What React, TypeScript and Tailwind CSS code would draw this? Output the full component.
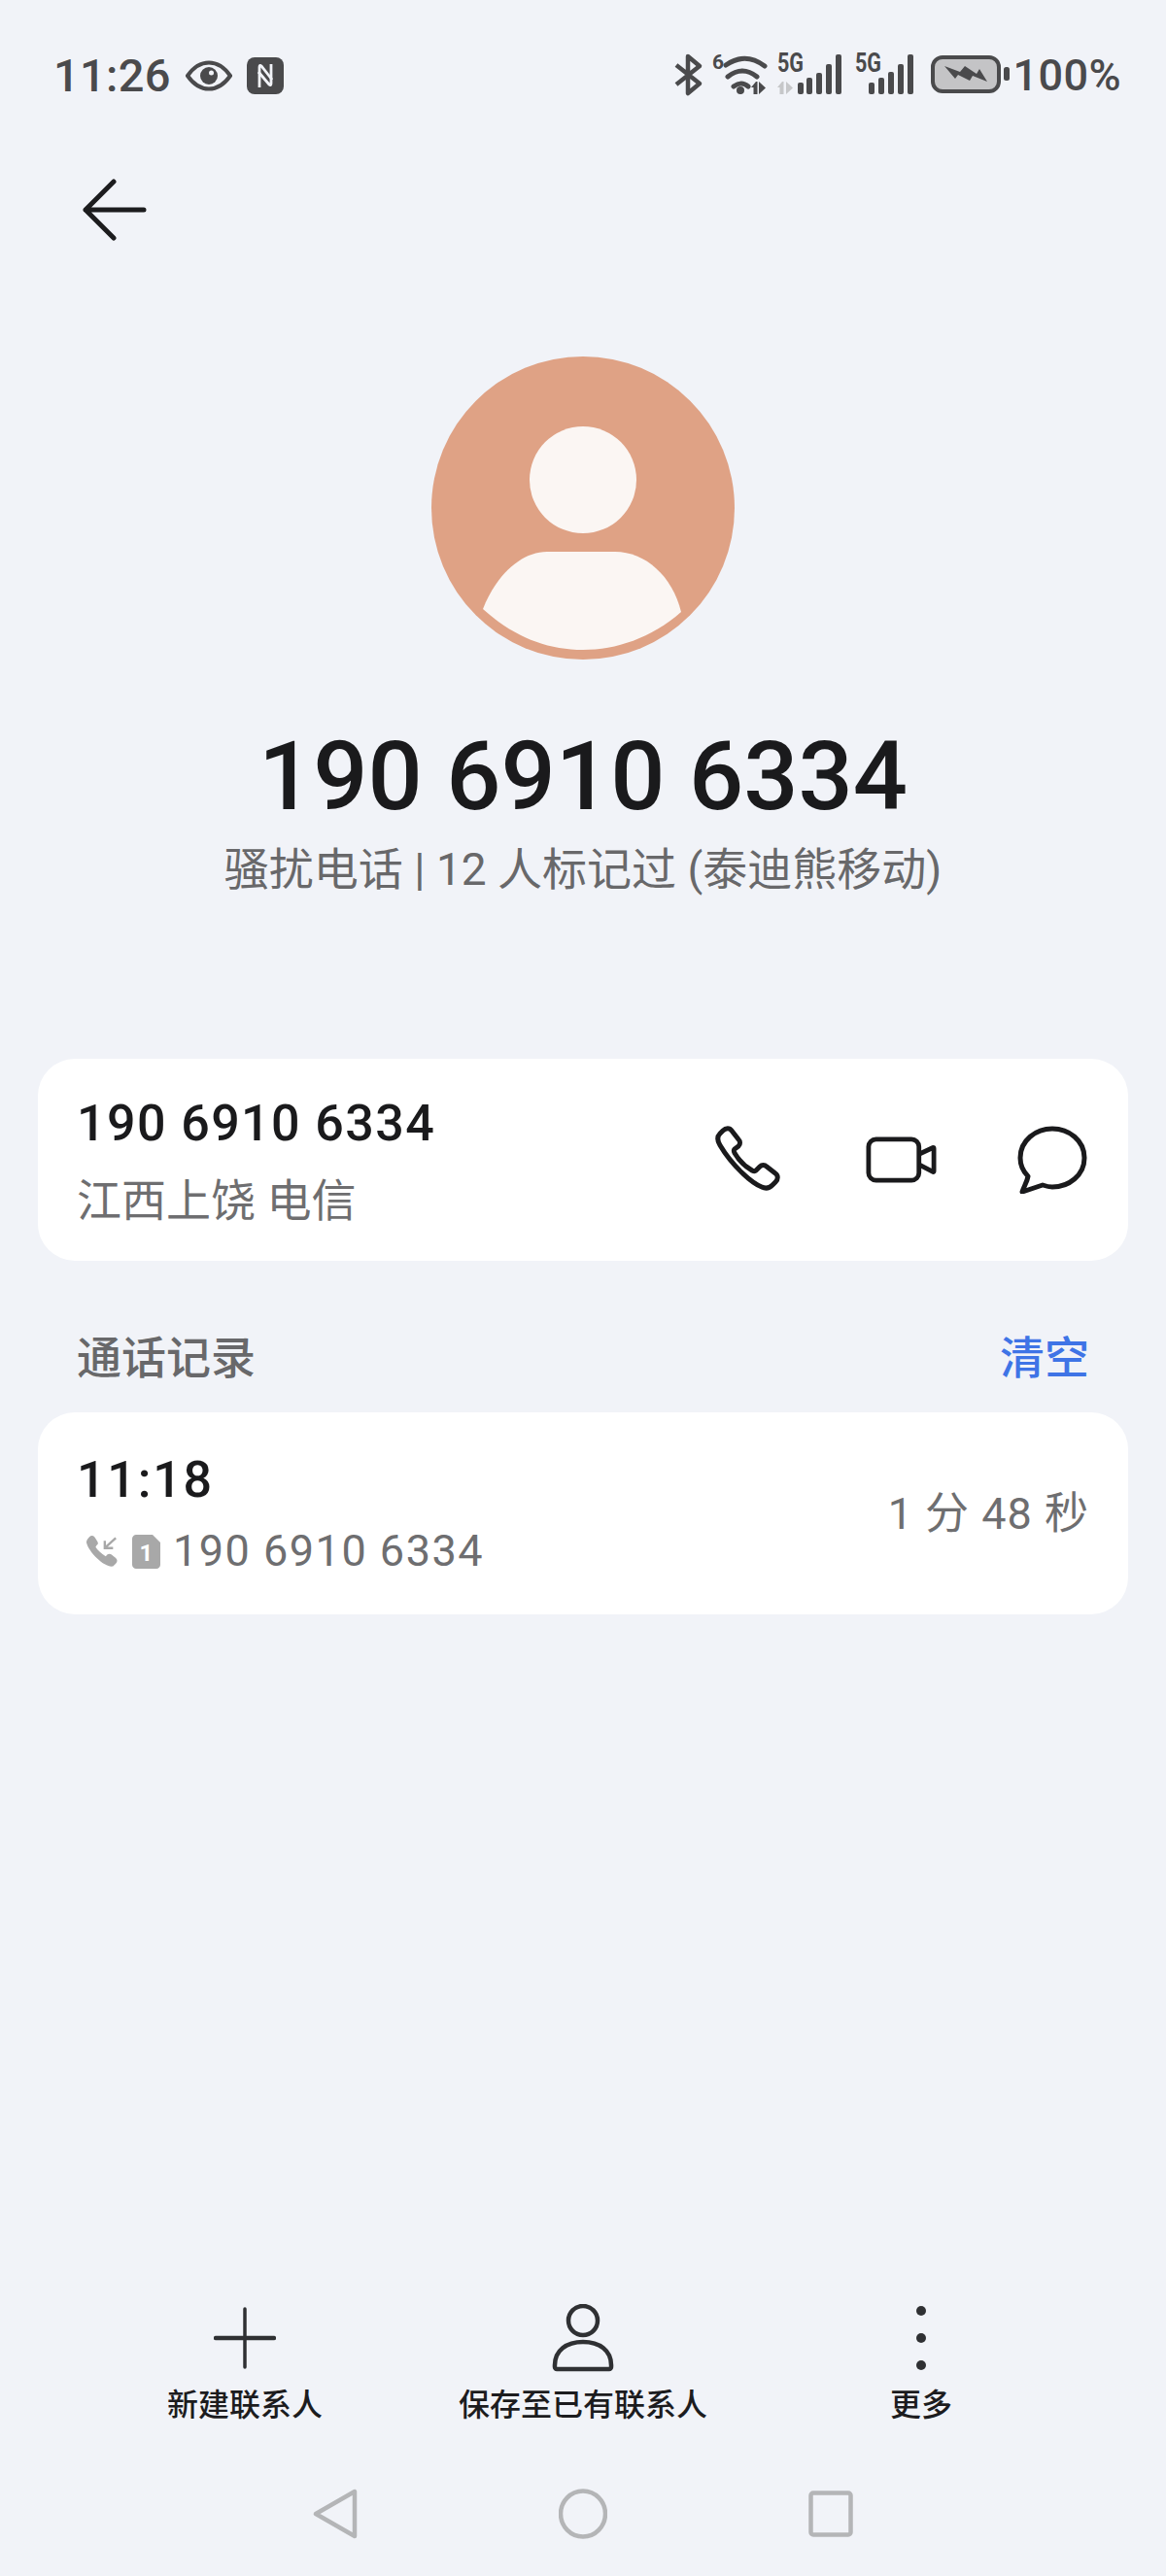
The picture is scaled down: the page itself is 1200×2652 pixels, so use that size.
const FONT = "font-['Roboto','Noto_Sans_CJK_SC',sans-serif]";
const INK = "#4a4a4c";

function StatusLeft() {
  return (
    <div className="flex items-center">
      <span className="text-[47px] leading-[55px] font-medium text-[#4a4a4c] tracking-[0.3px]">11:26</span>
      <svg width="48" height="32" viewBox="0 0 48 32" className="ml-[15px]">
        <path d="M2 16C9 6 16 2.500 24 2.500S39 6 46 16C39 26 32 29.500 24 29.500S9 26 2 16Z" fill="none" stroke={INK} strokeWidth="4" />
        <circle cx="24" cy="16" r="9" fill={INK} />
        <circle cx="26.500" cy="13" r="2.500" fill="#f1f3f8" />
      </svg>
      <svg width="38" height="38" viewBox="0 0 38 38" className="ml-[15px]">
        <rect x="0" y="0" width="38" height="38" rx="8" fill={INK} />
        <path d="M13 31V10c0-2 1-2 2-1L26 23" fill="none" stroke="#f1f3f8" strokeWidth="2.800" />
        <path d="M25 7V27c0 2-1 2-2 1L12 15" fill="none" stroke="#f1f3f8" strokeWidth="2.800" />
      </svg>
    </div>
  );
}

function StatusRight() {
  const bars1 = [
    [133, 35],
    [142, 30],
    [152, 25],
    [162, 16],
    [172, 6],
  ];
  const bars2 = [
    [206, 35],
    [216, 30],
    [226, 24],
    [236, 16],
    [246, 6],
  ];
  return (
    <div className="flex items-center">
      <svg width="352" height="67" viewBox="0 -6 352 67" className="shrink-0">
        <path d="M8 17L32 36 20 46V8L32 18 8 37" fill="none" stroke={INK} strokeWidth="4.500" strokeLinejoin="round" />
        <text x="45" y="21" fontSize="21" fontWeight="700" fill={INK} fontFamily="Roboto">6</text>
        <path d="M59 17Q79 3 99 18M61 29Q76 17 91 29M67 39Q75 33 82 39" fill="none" stroke={INK} strokeWidth="5" strokeLinecap="round" />
        <circle cx="74" cy="43" r="4" fill={INK} />
        <path d="M85 40l5-6h1.500V47h-4v-7zM93 34l7 6.500-7 6.500z" fill={INK} />
        <text transform="translate(112 24) scale(0.77 1)" fontSize="28" fontWeight="700" fill={INK} fontFamily="Roboto">5G</text>
        <path d="M112 40l5-6h1.500V47h-4v-7zM121 34l7 6.500-7 6.500z" fill="#c6c7c9" />
        {bars1.map(([x, y]) => (
          <rect key={x} x={x} y={y} width="6" height={47 - y} rx="2" fill={INK} />
        ))}
        <text transform="translate(192 24) scale(0.77 1)" fontSize="28" fontWeight="700" fill={INK} fontFamily="Roboto">5G</text>
        {bars2.map(([x, y]) => (
          <rect key={x} x={x} y={y} width="6" height={47 - y} rx="2" fill={INK} />
        ))}
        <rect x="272" y="9" width="68" height="35" rx="10" fill="#c4c4c6" stroke={INK} strokeWidth="4" />
        <path d="M284 18L300 24 305 18 317 26 320 21 328 34 313 28 310 33 298 27 295 31Z" fill={INK} />
        <rect x="345" y="19" width="6" height="14" rx="2.500" fill={INK} />
      </svg>
      <span className="ml-[3px] text-[45px] leading-[55px] font-medium text-[#4a4a4c] tracking-[0.4px]">100%</span>
    </div>
  );
}

function Avatar() {
  return (
    <div className="w-[312px] h-[312px] rounded-full bg-[#dfa285] overflow-hidden">
      <svg width="312" height="312" viewBox="0 0 312 312">
        <circle cx="156" cy="127" r="55" fill="#fbf6f3" />
        <path d="M53 260C66 226 92 201 119 201H189C220 201 248 226 257 263C226 290 190 302 156 302C118 302 84 288 53 260Z" fill="#fbf6f3" />
      </svg>
    </div>
  );
}

function ActionIcons() {
  return (
    <div className="flex items-center text-[#1a1a1c]">
      <svg width="70" height="70" viewBox="2 1 70 70" className="mr-[84px]" fill="none" stroke="currentColor" strokeWidth="5" strokeLinejoin="round">
        <path d="M10 6c3-3 7-3 9 0l7 9c2 2 2 5 0 7l-4 3c-1 1-1 2 0 4 4 7 11 14 18 18 2 1 3 1 4 0l4-4c2-2 5-2 7 0l9 7c3 2 3 6 0 9l-3 3c-3 3-7 4-11 2C40 60 20 43 7 21 4 16 4 12 7 9Z" />
      </svg>
      <svg width="75" height="48" viewBox="0 0 76 50" className="mr-[82px]" fill="none" stroke="currentColor" strokeWidth="5" strokeLinejoin="round">
        <rect x="3" y="3" width="54" height="44" rx="8" />
        <path d="M57 19l15-7c1 0 1 0 1 1v24c0 1 0 1-1 1l-15-8" />
      </svg>
      <svg width="72" height="70" viewBox="0 0 72 70" fill="none" stroke="currentColor" strokeWidth="5" strokeLinejoin="round">
        <path d="M36 3C53 3 69 15 69 33S53 63 36 63c-4 0-7-1-10-2L5 68c2-6 5-10 6-16C6 47 3 41 3 33 3 15 19 3 36 3Z" />
      </svg>
    </div>
  );
}

function BottomAction({ label, icon }: { label: string; icon: React.ReactNode }) {
  return (
    <div className="flex flex-col items-center w-[348px]">
      <div className="h-[72px] flex items-center justify-center">{icon}</div>
      <span className="mt-[11px] text-[32px] leading-[44px] font-medium text-[#1c1c1e] whitespace-nowrap">{label}</span>
    </div>
  );
}

export default function App() {
  return (
    <div className={`${FONT} w-[1200px] h-[2652px] bg-[#f1f3f8] flex flex-col overflow-hidden`}>
      <div className="flex items-center justify-between pl-[55px] pr-[46px] pt-[44px]">
        <StatusLeft />
        <StatusRight />
      </div>

      <div className="pl-[85px] mt-[73px]">
        <svg width="66" height="64" viewBox="0 0 66 64" fill="none" stroke="#1c1c1e" strokeWidth="5" strokeLinecap="round" strokeLinejoin="round">
          <path d="M32 3L3 32l29 29M3 32h60" />
        </svg>
      </div>

      <div className="flex flex-col items-center mt-[119px]">
        <Avatar />
        <div className="mt-[60px] text-[99px] leading-[120px] font-medium text-[#1a1a1c]">190 6910 6334</div>
        <div className="mt-[7px] text-[46px] leading-[58px] text-[#68686a]">骚扰电话 | 12 人标记过 (泰迪熊移动)</div>
      </div>

      <div className="mx-[39px] mt-[166px] h-[208px] rounded-[38px] bg-white flex items-center justify-between pl-[40px] pr-[42px]">
        <div>
          <div className="pt-[2px] text-[52px] leading-[62px] font-medium text-[#1a1a1c] tracking-[1.4px]">190 6910 6334</div>
          <div className="mt-[20px] text-[46px] leading-[56px] text-[#6e6e70]">江西上饶 电信</div>
        </div>
        <ActionIcons />
      </div>

      <div className="mx-[39px] mt-[75px] h-[50px] flex items-center justify-between pl-[40px] pr-[40px] text-[46px] leading-[50px]">
        <span className="text-[#68686a] font-medium">通话记录</span>
        <span className="text-[#3f74e6] font-medium">清空</span>
      </div>

      <div className="mx-[39px] mt-[31px] h-[208px] rounded-[38px] bg-white flex items-center justify-between pl-[40px] pr-[40px] pt-[2px]">
        <div>
          <div className="text-[52px] leading-[62px] font-medium text-[#1a1a1c] tracking-[1.800px]">11:18</div>
          <div className="mt-[14px] flex items-center">
            <svg width="34" height="35" viewBox="0 0 36 36" className="ml-[9px]">
              <path d="M4 2c2-2 4-2 6 0l3 5c1 2 1 3-1 4l-1 2c3 4 6 7 11 10l2-2c1-1 3-1 4 0l5 4c2 2 2 4 0 6l-3 3C22 36 4 20 1 8c0-2 1-4 3-6Z" fill="#a8a8a8" />
              <path d="M33 3L21 14M21 6v8h9" fill="none" stroke="#a8a8a8" strokeWidth="2.500" />
            </svg>
            <svg width="29" height="35" viewBox="0 0 29 35" className="ml-[14px]">
              <path d="M4 0H21L29 8V31c0 2-2 4-4 4H4c-2 0-4-2-4-4V4C0 2 2 0 4 0Z" fill="#a8a8a8" />
              <text x="14.500" y="27" textAnchor="middle" fontSize="24" fontWeight="700" fill="#ffffff" fontFamily="Roboto">1</text>
            </svg>
            <span className="ml-[13px] text-[45px] leading-[56px] text-[#6e6e70] tracking-[1.500px]">190 6910 6334</span>
          </div>
        </div>
        <span className="text-[45px] leading-[56px] text-[#6e6e70] tracking-[1px]">1 分 48 秒</span>
      </div>

      <div className="mt-auto flex justify-center">
        <BottomAction
          label="新建联系人"
          icon={
            <svg width="64" height="64" viewBox="0 0 64 64" stroke="#2f3033" strokeLinecap="round">
              <path d="M32 2v60" strokeWidth="3.500" />
              <path d="M2 32h60" strokeWidth="4.500" />
            </svg>
          }
        />
        <BottomAction
          label="保存至已有联系人"
          icon={
            <svg width="64" height="70" viewBox="0 0 64 70" fill="none" stroke="#2f3033" strokeWidth="4.500">
              <ellipse cx="32" cy="17" rx="15" ry="15" />
              <path d="M3 65c-1-18 13-26 29-26s30 8 29 26c0 1-1 2-2 2H5c-1 0-2-1-2-2Z" />
            </svg>
          }
        />
        <BottomAction
          label="更多"
          icon={
            <svg width="12" height="68" viewBox="0 0 12 68" fill="#2f3033">
              <circle cx="6" cy="6" r="5" />
              <circle cx="6" cy="34" r="5" />
              <circle cx="6" cy="62" r="5" />
            </svg>
          }
        />
      </div>

      <div className="mt-[64px] mb-[38px] flex items-center justify-center h-[52px]">
        <div className="w-[255px] flex justify-center">
          <svg width="46" height="52" viewBox="0 0 46 52" fill="none" stroke="#b4b5b7" strokeWidth="4.500" strokeLinejoin="round">
            <path d="M43 3v46L3 26Z" />
          </svg>
        </div>
        <div className="w-[255px] flex justify-center">
          <svg width="50" height="52" viewBox="0 0 50 52" fill="none" stroke="#b4b5b7" strokeWidth="4.500">
            <ellipse cx="25" cy="26" rx="23" ry="23.500" />
          </svg>
        </div>
        <div className="w-[255px] flex justify-center">
          <svg width="46" height="48" viewBox="0 0 46 48" fill="none" stroke="#b4b5b7" strokeWidth="4.500" strokeLinejoin="round">
            <rect x="2.500" y="2.500" width="41" height="43" rx="2.500" />
          </svg>
        </div>
      </div>
    </div>
  );
}
